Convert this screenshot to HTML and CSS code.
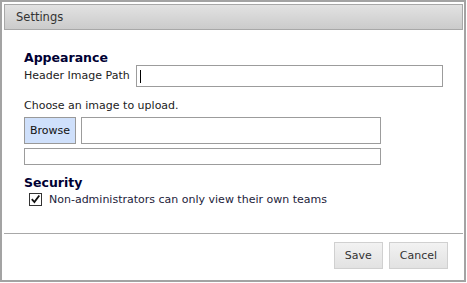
FILE: index.html
```html
<!DOCTYPE html>
<html lang="en">
<head>
    <meta charset="UTF-8">
    <title>Settings</title>
    <link rel="stylesheet" href="styles.css">
</head>
<body>
    <!-- Settings dialog -->
    <div class="dialog">
        <div class="dialog-title">Settings</div>

        <div class="dialog-body">
            <h3 class="section-title">Appearance</h3>
            <div class="field-row">
                <label class="field-label" for="headerPath">Header Image Path</label>
                <div class="text-box wide"><span class="caret"></span></div>
            </div>

            <p class="hint">Choose an image to upload.</p>
            <div class="upload-row">
                <button class="browse-button">Browse</button>
                <div class="text-box file-name"></div>
            </div>
            <div class="text-box progress"></div>

            <h3 class="section-title security">Security</h3>
            <label class="check-row">
                <span class="check-box">
                    <svg viewBox="0 0 11 11"><path d="M1.8 5.2l2.6 2.9 4.9-6.6" fill="none" stroke="#111" stroke-width="1.8"/></svg>
                </span>
                Non-administrators can only view their own teams
            </label>
        </div>

        <div class="dialog-footer">
            <button class="action-button">Save</button>
            <button class="action-button">Cancel</button>
        </div>
    </div>
</body>
</html>
```

FILE: styles.css
```css
/* Page */
body {
    margin: 0;
    background: #fff;
    font-family: 'DejaVu Sans', Verdana, sans-serif;
    font-size: 11px;
    color: #222;
}

/* Dialog frame */
.dialog {
    width: 462px;
    height: 278px;
    border: 2px solid #a3a3a3;
    display: flex;
    flex-direction: column;
}

.dialog-title {
    margin: 2px 1px 0 2px;
    height: 24px;
    border: 1px solid #a8a8a8;
    background: linear-gradient(#e2e2e2, #cbcbcb);
    padding-left: 11px;
    line-height: 24px;
    font-size: 11.5px;
    color: #333;
}

.dialog-body {
    padding: 20px 0 0 22px;
    height: 183px;
}

/* Section headings */
.section-title {
    margin: 0;
    font-size: 12.5px;
    font-weight: bold;
    color: #000033;
    line-height: 15px;
}

.section-title.security {
    margin-top: 10px;
}

/* Text fields */
.field-row {
    display: flex;
    align-items: center;
    gap: 6px;
}

.field-label {
    line-height: 20px;
}

.text-box {
    border: 1px solid #9c9c9c;
    background: #fff;
    box-sizing: border-box;
    position: relative;
}

.text-box.wide {
    width: 307px;
    height: 22px;
}

.caret {
    position: absolute;
    left: 3px;
    top: 4px;
    width: 1px;
    height: 13px;
    background: #000;
}

.hint {
    margin: 11px 0 3px;
    line-height: 16px;
}

.upload-row {
    display: flex;
    gap: 5px;
}

.browse-button {
    width: 52px;
    height: 27px;
    border: 1px solid #999;
    background: #cfe0fb;
    font-family: inherit;
    font-size: 11px;
    color: #111;
    padding: 0;
}

.text-box.file-name {
    width: 300px;
    height: 27px;
}

.text-box.progress {
    width: 357px;
    height: 17px;
    margin-top: 4px;
}

/* Checkbox row */
.check-row {
    display: flex;
    align-items: center;
    gap: 7px;
    margin: 3px 0 0 5px;
    font-size: 11px;
    color: #1c1c3a;
}

.check-box {
    width: 11px;
    height: 11px;
    border: 1px solid #333;
    background: #fff;
    display: flex;
}

.check-box svg {
    width: 11px;
    height: 11px;
}

/* Footer */
.dialog-footer {
    margin: 0 1px 0 2px;
    border-top: 1px solid #a8a8a8;
    display: flex;
    justify-content: flex-end;
    gap: 6px;
    padding: 8px 15px 0 0;
}

.action-button {
    height: 27px;
    padding: 0 10px;
    border: 1px solid #d0d0d0;
    background: linear-gradient(#f2f2f2, #e2e2e2);
    font-family: inherit;
    font-size: 11px;
    color: #333;
}
```
